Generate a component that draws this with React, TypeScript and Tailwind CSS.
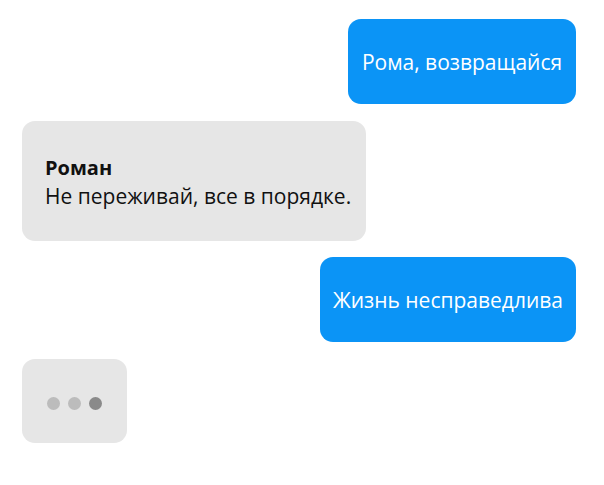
import React from "react";

export default function App() {
  const font = { fontFamily: '"Open Sans", "Noto Sans", sans-serif' };
  return (
    <div
      className="w-[604px] h-[485px] bg-white flex flex-col pt-[19px] pl-[22px] pr-[28px]"
      style={font}
    >
      <div className="self-end w-[228px] h-[85px] rounded-[13px] bg-[#0b94f6] flex items-center justify-center text-white text-[21px] leading-[28px]">
        Рома, возвращайся
      </div>
      <div className="mt-[17px] w-[344px] h-[120px] rounded-[13px] bg-[#e6e6e6] flex flex-col justify-center pl-[23px] pt-[2px] text-[21px] leading-[29px] text-[#111]">
        <div className="font-bold text-[20px]">Роман</div>
        <div>Не переживай, все в порядке.</div>
      </div>
      <div className="mt-[16px] self-end w-[256px] h-[85px] rounded-[13px] bg-[#0b94f6] flex items-center justify-center text-white text-[21px] leading-[28px]">
        Жизнь несправедлива
      </div>
      <div className="mt-[17px] w-[105px] h-[84px] rounded-[13px] bg-[#e6e6e6] flex items-center justify-center gap-[8px] pt-[4px]">
        <span className="w-[13px] h-[13px] rounded-full bg-[#bcbcbc]" />
        <span className="w-[13px] h-[13px] rounded-full bg-[#bcbcbc]" />
        <span className="w-[13px] h-[13px] rounded-full bg-[#8a8a8a]" />
      </div>
    </div>
  );
}
